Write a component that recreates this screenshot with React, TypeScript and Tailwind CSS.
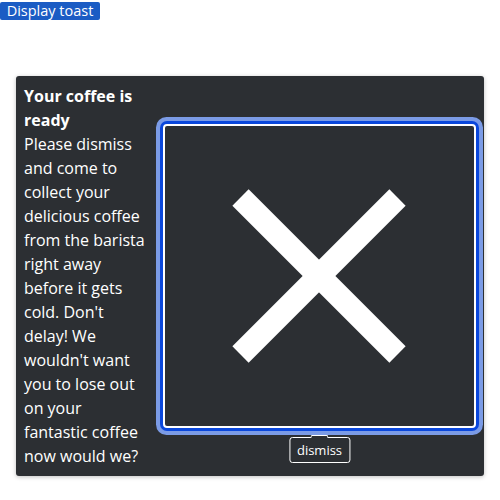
export default function App() {
  return (
    <div className="relative h-[500px] w-[500px] bg-white font-['Open_Sans','Noto_Sans',sans-serif]">
      <div className="pt-[2px]">
        <button
          type="button"
          className="block h-[18px] w-[100px] rounded-[2px] bg-[#1b5cc4] text-center text-[14.5px] leading-[18px] text-white"
        >
          Display toast
        </button>
      </div>

      <div className="ml-4 mt-[56px] flex h-[400px] w-[468px] items-center rounded-[3px] bg-[#2c2f33] p-2 shadow-[0_1px_4px_rgba(0,0,0,0.25)]">
        <div className="w-[125px] self-start text-[16px] leading-[24px] text-white">
          <div className="font-bold">Your coffee is ready</div>
          <div>
            Please dismiss and come to collect your delicious coffee from the barista right away
            before it gets cold. Don't delay! We wouldn't want you to lose out on your fantastic
            coffee now would we?
          </div>
        </div>

        <div className="relative ml-[14px] h-[304px] w-[313px]">
          <button
            type="button"
            aria-label="dismiss"
            className="flex h-full w-full items-center justify-center rounded-[4px] border-2 border-white bg-[#2c2f33] shadow-[0_0_0_3px_#0a47dc,0_0_0_7px_#7b9be6]"
          >
            <svg width="180" height="180" viewBox="0 0 180 180" className="mr-[1px]">
              <line x1="11.5" y1="11.5" x2="168.5" y2="168.5" stroke="white" strokeWidth="23" />
              <line x1="168.5" y1="11.5" x2="11.5" y2="168.5" stroke="white" strokeWidth="23" />
            </svg>
          </button>

          <div className="absolute left-1/2 top-[calc(100%+9px)] -translate-x-1/2 rounded-[3px] border border-white bg-[#2c2f33] px-[7px] text-[13px] leading-[24px] text-white">
            dismiss
            <div className="absolute -top-[3px] left-1/2 h-[3px] w-[18px] -translate-x-1/2 rounded-t-[2px] border-x border-t border-white bg-[#2c2f33]" />
          </div>
        </div>
      </div>
    </div>
  )
}
